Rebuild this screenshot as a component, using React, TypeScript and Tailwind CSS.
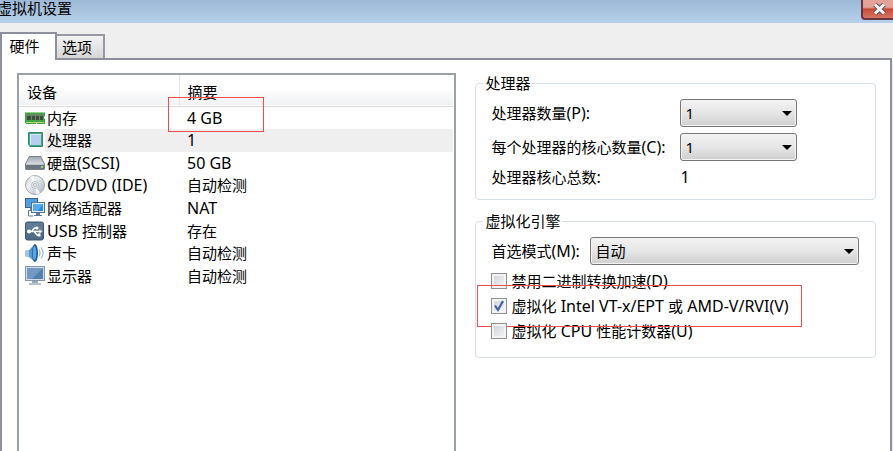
import { useState } from 'react';
import type { ReactNode } from 'react';
import clsx from 'clsx';

interface Device {
  id: string;
  name: string;
  summary: string;
  icon: ReactNode;
}

const MemoryIcon = () => (
  <svg width="20" height="20" viewBox="0 0 20 20">
    <path d="M0 4h20v4l-1 1v1l1 1v5H12v-1h-1v1H1v-1H0z" fill="#3fa548" />
    <path d="M0 4h20v1H0z" fill="#8fd08a" />
    <path d="M1 14h18v1H1z" fill="#c3d566" />
    <path d="M2 6h4v6H2zM7 6h3v6H7zM11 6h3v6h-3zM15 6h3v6h-3z" fill="#454845" />
    <path d="M2 6h4v2H2zM7 6h3v2H7zM11 6h3v2h-3zM15 6h3v2h-3z" fill="#747a72" />
  </svg>
);

const CpuIcon = () => (
  <svg width="20" height="20" viewBox="0 0 20 20">
    <rect x="3" y="2" width="15" height="15" rx="1" fill="#2d8a6d" />
    <rect x="4" y="3" width="13" height="13" fill="#45a585" />
    <rect x="5" y="4" width="11" height="11" fill="#b5d0ee" />
    <path d="M5 4h11v1H6v10H5z" fill="#dce9f7" />
    <path d="M3 14l2 3H3z" fill="#d9efe6" />
  </svg>
);

const DiskIcon = () => (
  <svg width="20" height="20" viewBox="0 0 20 20">
    <defs>
      <linearGradient id="disk" x1="0" y1="0" x2="0" y2="1">
        <stop offset="0" stopColor="#a4aab2" />
        <stop offset="1" stopColor="#d7dbe0" />
      </linearGradient>
    </defs>
    <path d="M4 3h12l4 8v5l-1 1H1l-1-1v-5z" fill="#79818b" />
    <path d="M4.500 4h11L19 11H1z" fill="url(#disk)" />
    <path d="M1 11h18v5H1z" fill="#6c747e" />
    <path d="M1 11h18v1H1z" fill="#bcc2c9" />
    <path d="M16 13h2v2h-2z" fill="#8fe06a" />
  </svg>
);

const DiscIcon = () => (
  <svg width="20" height="20" viewBox="0 0 20 20">
    <defs>
      <linearGradient id="disc" x1="0" y1="0" x2="1" y2="1">
        <stop offset="0" stopColor="#c3c8cf" />
        <stop offset=".35" stopColor="#eef0f3" />
        <stop offset=".6" stopColor="#d3d8de" />
        <stop offset="1" stopColor="#a9b1bb" />
      </linearGradient>
    </defs>
    <circle cx="10" cy="10" r="9.500" fill="url(#disc)" stroke="#9299a3" strokeWidth=".8" />
    <path d="M10 10L5 2a9 9 0 0 1 4-1zM10 10l5 8a9 9 0 0 1-4 1z" fill="#f8f9fa" />
    <circle cx="10" cy="10" r="3.500" fill="#e9ecf0" stroke="#a5adb7" strokeWidth=".7" />
    <circle cx="10" cy="10" r="1.500" fill="#fff" stroke="#8c96a2" strokeWidth=".7" />
  </svg>
);

const NetworkIcon = () => (
  <svg width="20" height="20" viewBox="0 0 20 20">
    <rect x="0.500" y="0.500" width="12" height="9" fill="#4d9fe0" stroke="#3d6285" />
    <path d="M5 10h3v2H5zM3 12h4v1H3z" fill="#6b7f94" />
    <path d="M3.500 13v5H8" fill="none" stroke="#5b7690" />
    <rect x="6.500" y="4.500" width="13" height="10" fill="#e5eef7" stroke="#50718f" />
    <rect x="8" y="6" width="10" height="7" fill="#2489e2" />
    <path d="M8 6h10l-5 7H8z" fill="#54abf0" />
    <path d="M11 15h4v2h-4zM9 17h8v1H9z" fill="#5f7993" />
  </svg>
);

const UsbIcon = () => (
  <svg width="20" height="20" viewBox="0 0 20 20">
    <rect x="0.500" y="1" width="18" height="18" rx="2" fill="#4f6b87" stroke="#3f566e" />
    <path d="M1 2h17v8H1z" fill="#627c96" />
    <path d="M4 10.500h11M6.500 10.500l3-3.500h2M9 10.500l3 3.500h2" stroke="#fff" strokeWidth="1.300" fill="none" />
    <circle cx="4" cy="10.500" r="2" fill="#fff" />
    <path d="M14.500 8.500l3 2-3 2zM12.500 12.500h3v3h-3z" fill="#fff" />
    <circle cx="12" cy="7" r="1.500" fill="#fff" />
  </svg>
);

const SoundIcon = () => (
  <svg width="20" height="20" viewBox="0 0 20 20">
    <path d="M1 7h3l6-6v18l-6-5H1C0 12 0 9 1 7z" fill="#5b97ce" />
    <path d="M1 7h3v7H1C0 12 0 9 1 7z" fill="#a3c3e0" />
    <ellipse cx="10" cy="10" rx="3" ry="9" fill="#1f5c9c" />
    <ellipse cx="9.500" cy="10" rx="1.800" ry="7" fill="#5ba6e2" />
    <path d="M14 6.500q2 3.500 0 7M16 4.500q4 5.500 0 11" fill="none" stroke="#9db7cf" strokeWidth="1.200" />
  </svg>
);

const DisplayIcon = () => (
  <svg width="20" height="20" viewBox="0 0 20 20">
    <rect x="0.500" y="0.500" width="19" height="14" fill="#d3dde8" stroke="#8495a8" />
    <rect x="2" y="2" width="16" height="11" fill="#537fae" />
    <path d="M2 2h16L7 13H2z" fill="#7399c2" />
    <path d="M7 15h6v2H7z" fill="#9aa8b6" />
    <path d="M4 17h12v2H4z" fill="#b6c0cb" />
  </svg>
);

const devices: Device[] = [
  { id: 'memory', name: '内存', summary: '4 GB', icon: <MemoryIcon /> },
  { id: 'cpu', name: '处理器', summary: '1', icon: <CpuIcon /> },
  { id: 'disk', name: '硬盘(SCSI)', summary: '50 GB', icon: <DiskIcon /> },
  { id: 'cd', name: 'CD/DVD (IDE)', summary: '自动检测', icon: <DiscIcon /> },
  { id: 'network', name: '网络适配器', summary: 'NAT', icon: <NetworkIcon /> },
  { id: 'usb', name: 'USB 控制器', summary: '存在', icon: <UsbIcon /> },
  { id: 'sound', name: '声卡', summary: '自动检测', icon: <SoundIcon /> },
  { id: 'display', name: '显示器', summary: '自动检测', icon: <DisplayIcon /> },
];

// Latin runs are set one size up so that they balance the Chinese glyphs
const MixedText = ({ text }: { text: string }) => (
  <span className="whitespace-pre">
    {text.split(/([\x20-\x7e]+)/).map((part, index) =>
      index % 2 === 1 ? (
        <span key={index} className="text-base leading-none">{part}</span>
      ) : (
        part
      )
    )}
  </span>
);

interface DropdownProps {
  id: string;
  options: string[];
  className?: string;
}

const Dropdown = ({ id, options, className }: DropdownProps) => (
  <div className={clsx('relative h-7', className)}>
    <select
      id={id}
      className="block h-7 w-full appearance-none rounded-[3px] border border-[#777] bg-linear-to-b from-[#f3f3f3] from-0% via-[#e6e6e6] via-50% to-[#cfcfcf] px-1 leading-[26px] shadow-[inset_0_0_0_1px_#f4f4f4]"
    >
      {options.map((option) => (
        <option key={option}>{option}</option>
      ))}
    </select>
    <svg width="10" height="5" viewBox="0 0 10 5" className="pointer-events-none absolute right-[5px] top-3">
      <path d="M0 0h10L5 5z" fill="#000" />
    </svg>
  </div>
);

interface CheckOptionProps {
  id: string;
  label: string;
  initial?: boolean;
}

const CheckOption = ({ id, label, initial = false }: CheckOptionProps) => {
  const [checked, setChecked] = useState(initial);

  return (
    <div className="flex h-[25px] items-center gap-1">
      <span className="relative h-4 w-4">
        <input
          id={id}
          type="checkbox"
          checked={checked}
          onChange={(e) => setChecked(e.target.checked)}
          className="block h-4 w-4 appearance-none border border-[#8e8f8f] bg-linear-to-br from-[#cfd3d8] to-[#f6f6f6] shadow-[inset_0_0_0_2px_#f4f4f4]"
        />
        {checked && (
          <svg width="16" height="16" viewBox="0 0 16 16" className="pointer-events-none absolute left-0 top-0">
            <path d="M4 7.500l3 4.500L12 3" fill="none" stroke="#44609f" strokeWidth="2.200" />
          </svg>
        )}
      </span>
      <label htmlFor={id}>
        <MixedText text={label} />
      </label>
    </div>
  );
};

const DeviceList = () => {
  const [selected, setSelected] = useState('cpu');

  return (
    <div className="mt-[13px] border-2 border-b-0 border-[#9ba1a9] pr-px">
      <div className="relative">
        <table className="h-[212px] w-full table-fixed border-collapse">
          <thead>
            <tr className="h-[31px] border-b border-[#d9dadc] bg-linear-to-b from-white from-40% to-[#f1f2f4] text-left">
              <th className="w-[160px] border-r border-[#e2e4e7] pl-2 pt-1 font-normal">设备</th>
              <th className="pl-2 pt-1 font-normal">摘要</th>
            </tr>
          </thead>
          <tbody>
            {devices.map((device) => (
              <tr key={device.id} onClick={() => setSelected(device.id)}>
                <td className="h-px p-0">
                  <div className="flex h-full items-center pl-1.5">
                    <span className="w-5">{device.icon}</span>
                    <span
                      className={clsx(
                        'flex h-full flex-1 items-center pl-0.5',
                        selected === device.id && 'bg-[#efefef]'
                      )}
                    >
                      <MixedText text={device.name} />
                    </span>
                  </div>
                </td>
                <td className={clsx('p-0 pl-2', selected === device.id && 'bg-[#efefef]')}>
                  <MixedText text={device.summary} />
                </td>
              </tr>
            ))}
          </tbody>
        </table>
        <div className="pointer-events-none absolute left-[149px] top-[22px] h-[35px] w-24 border border-[#f24d4d]" />
      </div>
    </div>
  );
};

const groupClass = 'relative min-w-0 rounded-[4px] border border-[#d5dfe5] pl-[15px] pr-4';
const legendClass = '-ml-2 h-[22px] px-0.5 leading-[22px]';

const ProcessorGroup = () => (
  <fieldset className={clsx(groupClass, 'pb-3')}>
    <legend className={legendClass}>处理器</legend>
    <div className="grid grid-cols-[189px_117px] items-center gap-y-1.5 pt-[5px]">
      <label htmlFor="cpu-count">
        <MixedText text="处理器数量(P):" />
      </label>
      <Dropdown id="cpu-count" options={['1', '2', '4']} />
      <label htmlFor="core-count">
        <MixedText text="每个处理器的核心数量(C):" />
      </label>
      <Dropdown id="core-count" options={['1', '2', '4']} />
      <MixedText text="处理器核心总数:" />
      <MixedText text="1" />
    </div>
  </fieldset>
);

const VirtualizationGroup = () => (
  <fieldset className={clsx(groupClass, 'pb-3.5')}>
    <legend className={legendClass}>虚拟化引擎</legend>
    <div className="flex items-center pb-[3px] pt-[5px]">
      <label htmlFor="mode" className="w-[99px] shrink-0">
        <MixedText text="首选模式(M):" />
      </label>
      <Dropdown id="mode" options={['自动', 'Intel VT-x', 'AMD-V']} className="flex-1" />
    </div>
    <CheckOption id="binary" label="禁用二进制转换加速(D)" />
    <div className="relative">
      <CheckOption id="vtx" label="虚拟化 Intel VT-x/EPT 或 AMD-V/RVI(V)" initial />
      <div className="pointer-events-none absolute -left-3.5 -top-2 h-[42px] w-[325px] border border-[#f24d4d]" />
    </div>
    <CheckOption id="counters" label="虚拟化 CPU 性能计数器(U)" />
  </fieldset>
);

const App = () => {
  return (
    <div className="flex h-screen min-h-[360px] flex-col overflow-hidden bg-[#efefef] font-['Noto_Sans','Noto_Sans_CJK_SC',sans-serif] text-[15px] leading-5 text-black">
      <header className="flex h-[23px] shrink-0 justify-between bg-linear-to-b from-[#9db9d7] to-[#b7d0ea]">
        <h1 className="-ml-[3px] leading-4">虚拟机设置</h1>
        <button
          type="button"
          aria-label="关闭"
          className="flex h-5 w-8 items-center justify-center rounded-bl-[4px] border-b-2 border-l-2 border-[#6b3443] bg-linear-to-b from-[#e3a399] from-40% via-[#c64b35] via-50% to-[#d47464]"
        >
          <svg width="16" height="12" viewBox="0 0 16 12" className="ml-1">
            <path d="M3 1.500l9 9M12 1.500l-9 9" stroke="#66505a" strokeWidth="5" />
            <path d="M3 1.500l9 9M12 1.500l-9 9" stroke="#f4f4f4" strokeWidth="3" />
          </svg>
        </button>
      </header>

      <nav className="flex h-[35px] shrink-0 items-end">
        <button type="button" className="relative z-10 -mb-0.5 h-7 w-[57px] border-2 border-b-0 border-[#8d8f9e] bg-white pb-0.5 pr-2">
          硬件
        </button>
        <button type="button" className="h-6 w-12 border-2 border-b-0 border-l-0 border-[#9698a2] bg-linear-to-b from-[#f3f3f3] to-[#d6d6d6] pr-1.5">
          选项
        </button>
      </nav>

      <main className="mr-px grid flex-1 grid-cols-[440fr_401fr] gap-x-[19px] border-2 border-b-0 border-[#8d8f9e] bg-white pl-[15px] pr-3.5">
        <DeviceList />
        <div className="flex flex-col gap-2.5 pt-3">
          <ProcessorGroup />
          <VirtualizationGroup />
        </div>
      </main>
    </div>
  );
};

export default App;
